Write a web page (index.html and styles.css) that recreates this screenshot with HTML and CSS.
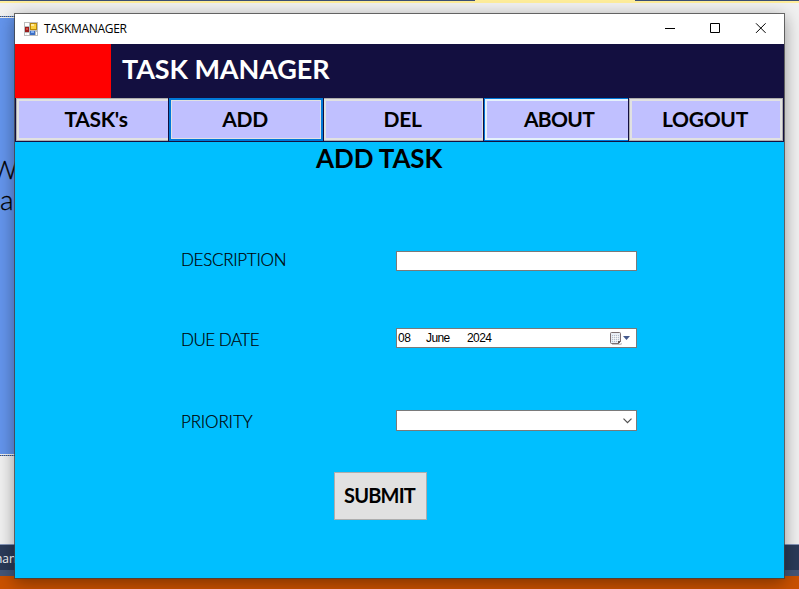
FILE: index.html
```html
<!DOCTYPE html>
<html lang="en">
<head>
<meta charset="utf-8">
<title>TASKMANAGER</title>
<link rel="stylesheet" href="styles.css">
</head>
<body>
<div class="desktop">
  <div class="tabline"><span class="active-tab"></span></div>
  <div class="editor">
    <div class="designer"><div class="form-text"><div class="first">W</div><div class="second">a</div></div></div>
  </div>
  <div class="panel"><span>nan</span></div>
  <div class="statusbar"></div>
</div>
<main class="window">
  <div class="titlebar">
    <svg class="app-icon" width="14" height="14" viewBox="0 0 14 14" shape-rendering="crispEdges">
      <path fill="#bdbdbd" d="M0 0h14v14H0z"/>
      <path fill="#fff" d="M1 1h4v3H1zM1 11h4v2H1zM12 10h1v3h-1z"/>
      <path fill="#f3f3f3" d="M2 11h1v2H2z"/>
      <path fill="#b98a0c" d="M6 1h7v7H6z"/>
      <path fill="#fbd13e" d="M7 2h5v5H7z"/>
      <path fill="#ffeaa0" d="M7 2h3v2H7z"/>
      <path fill="#9b1c1c" d="M1 5h4v5H1z"/>
      <path fill="#d8483e" d="M2 6h2v2H2z"/>
      <path fill="#3c6fc4" d="M6 9h5v4H6z"/>
      <path fill="#86b1f2" d="M7 9h3v2H7z"/>
    </svg>
    <span class="caption">TASKMANAGER</span>
    <svg class="controls" width="102" height="11" viewBox="0 0 102 11" fill="none" stroke="#000">
      <path d="M0 5.500h10"/>
      <path d="M45.500 .5h9v9h-9z"/>
      <path d="M91 .3l9.600 9.600M100.600 .3L91 9.900"/>
    </svg>
  </div>
  <header class="header"><div class="logo"></div><h1>TASK MANAGER</h1></header>
  <nav class="nav">
    <button class="tasks"><span>TASK's</span></button>
    <button class="add"><span>ADD</span></button>
    <button class="del"><span>DEL</span></button>
    <button class="about"><span>ABOUT</span></button>
    <button class="logout"><span>LOGOUT</span></button>
  </nav>
  <section class="content">
    <h2>ADD TASK</h2>
    <div class="form">
      <label class="l1">DESCRIPTION</label>
      <div class="field"></div>
      <label class="l2">DUE DATE</label>
      <div class="field date">
        <span class="day">08</span><span class="month">June</span><span class="year">2024</span>
        <svg width="21" height="13" viewBox="0 0 21 13">
          <path fill="#c8c3c3" d="M2 11.500h9l1-1V12l-1 1H2z"/>
          <path fill="#e9eef5" stroke="#7b6e70" d="M1.500.5h8q1 0 1 1v8l-2 2h-7q-1 0-1-1v-9q0-1 1-1z"/>
          <path fill="#b4bccb" d="M2 3h7v7H2z"/>
          <path stroke="#fff" stroke-width=".7" d="M2 4.500h7M2 6.500h7M2 8.500h7M3.500 3v7M5.500 3v7M7.500 3v7"/>
          <path fill="#625759" d="M8 12V9h3z"/>
          <path fill="#44598c" d="M13 4h7l-3.500 4z"/>
        </svg>
      </div>
      <label class="l3">PRIORITY</label>
      <div class="field combo">
        <svg width="9" height="6" viewBox="0 0 9 6" fill="none" stroke="#505050" stroke-width="1.200"><path d="M.5.7l4 4 4-4"/></svg>
      </div>
    </div>
    <button class="submit"><span>SUBMIT</span></button>
  </section>
</main>
</body>
</html>
```

FILE: styles.css
```css
* { box-sizing: border-box; }
body { margin: 0; width: 799px; height: 589px; overflow: hidden; position: relative; font-family: Lato, "Liberation Sans", sans-serif; color: #000; }
button { font-family: inherit; padding: 0; margin: 0; border-radius: 0; color: #000; }
span { white-space: nowrap; }
.desktop { display: flex; flex-direction: column; height: 589px; overflow: hidden; }
.tabline { height: 3px; background: #ffee9b; border-top: 1px solid #3b4f74; position: relative; }
.active-tab { position: absolute; left: 475px; top: -1px; width: 160px; height: 1px; background: #ffee9b; }
.editor { height: 541px; background: #f1f1f1; padding-top: 13px; }
.designer { width: 15px; height: 440px; background: #6495ed; border-top: 1px dotted #555; border-bottom: 1px dotted #555; overflow: hidden; box-shadow: inset 0 1px #f1f1f1, inset 0 -1px #f1f1f1; }
.form-text { margin-top: 137px; font-size: 25px; line-height: 30px; }
.first { margin-left: -8px; font-weight: 300; -webkit-text-stroke: .3px #000; }
.second { font-size: 28px; font-weight: 300; -webkit-text-stroke: .3px #000; }
.panel { height: 32px; background: #2b3b59; border-top: 1px solid #8595b8; border-bottom: 6px solid #435678; color: #fff; font: 12px/28px "Open Sans", sans-serif; overflow: hidden; }
.panel span { margin-left: -5px; }
.statusbar { height: 13px; background: #ca5100; }
.window { position: absolute; left: 14px; top: 13px; width: 771px; height: 566px; border: 1px solid rgba(65,65,65,.76); background: #00bfff; background-clip: padding-box; box-shadow: 0 4px 16px rgba(0,0,0,.38); display: flex; flex-direction: column; }
.titlebar { height: 30px; background: #fff; display: flex; align-items: center; padding: 0 17px 1px 9px; }
.app-icon { margin-right: 6px; }
.caption { font: 12px/20px "Open Sans", sans-serif; letter-spacing: -.3px; }
.controls { margin-left: auto; }
.header { height: 54px; background: #130f40; display: flex; }
.logo { width: 96px; background: #f00; }
.header h1 { margin: 0 0 0 11px; color: #fff; font-size: 27px; line-height: 50px; letter-spacing: -.1px; font-weight: 700; }
.nav { height: 44px; background: #130f40; padding: 0 1px 1px; display: grid; grid-template-columns: 152px 154px 159px 144px 154px; column-gap: 1px; }
.nav button { height: 43px; background: #c0c0ff; font-size: 21px; line-height: 37px; font-weight: 700; border: 1px solid #adadad; box-shadow: inset 0 0 0 2px #e1e1e1; letter-spacing: -.3px; padding: 0 2px 2px 0; }
.nav .tasks { border-right: 0; box-shadow: inset 2px 2px #e1e1e1, inset 0 -2px #e1e1e1; padding: 0 0 2px 7px; }
.nav .add { border: 2px solid #0078d7; box-shadow: inset 0 0 0 1px #e1e1e1; }
.nav .del { border-left: 0; border-right: 0; box-shadow: inset 2px 2px #e1e1e1, inset -1px -2px #e1e1e1; }
.nav .about { border-color: #0078d7; border-right: 0; box-shadow: inset 2px 2px #e5f1fb, inset 0 -2px #e5f1fb; padding: 0 0 2px 5px; letter-spacing: -.7px; }
.content { flex: 1; display: flex; flex-direction: column; }
.content h2 { margin: 0 0 0 301px; font-size: 26px; line-height: 32px; font-weight: 700; letter-spacing: -.1px; height: 34px; }
.form { margin: 75px 0 0 166px; display: grid; grid-template-columns: 215px 241px; grid-template-rows: 20px 20px 26px; row-gap: 57px; height: 181px; }
.form label { font-size: 17px; line-height: 18px; font-weight: 300; letter-spacing: -.3px; white-space: nowrap; -webkit-text-stroke: .2px #000; }
.form .l2 { padding-top: 3px; letter-spacing: -.5px; }
.form .l3 { padding-top: 8px; letter-spacing: -.15px; }
.field { background: #fff; border: 1px solid #7a7a7a; }
.combo { margin-top: 5px; height: 21px; display: flex; align-items: center; justify-content: flex-end; padding-right: 4px; }
.date { display: flex; align-items: center; font: 12px/17px "Liberation Sans", sans-serif; letter-spacing: -.6px; padding: 0 5px 0 1px; }
.day { width: 28px; letter-spacing: -.3px; }
.month { width: 41px; }
.date svg { margin-left: auto; }
.submit { margin: 40px 0 0 319px; width: 93px; height: 48px; background: #e1e1e1; border: 1px solid #adadad; font-size: 20px; font-weight: 700; letter-spacing: -.8px; padding: 0 2px 2px 0; }
```
